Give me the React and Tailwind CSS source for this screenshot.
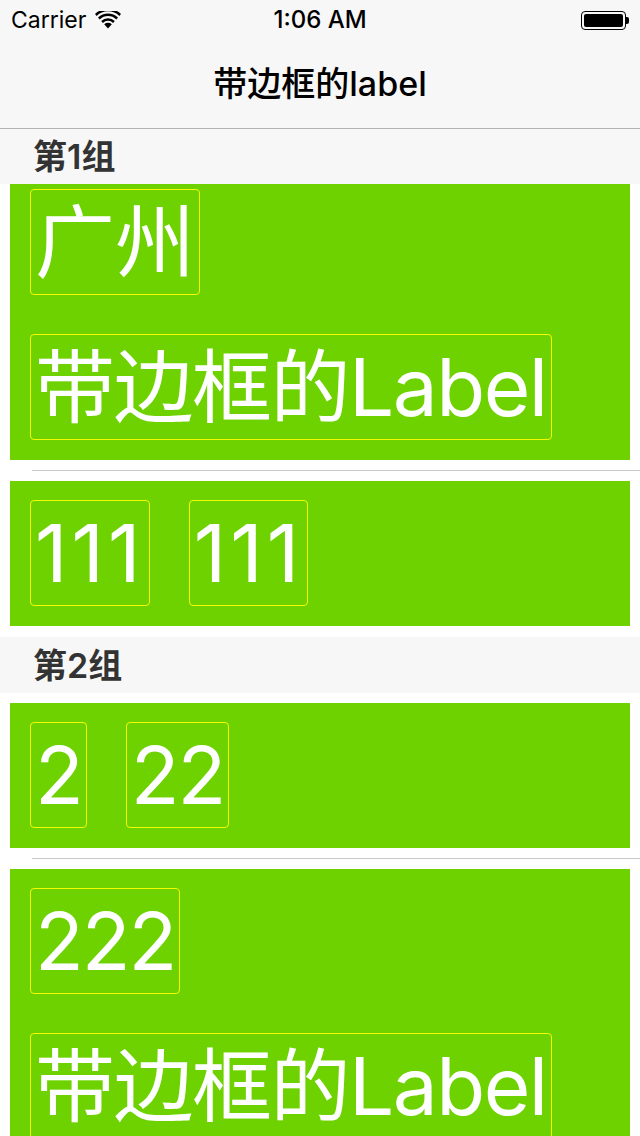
import React from 'react';

// tracking tweaks get the box widths close to the original label frames
const groups = [
  {
    title: '第1组',
    headerH: 'h-[55px]',
    rows: [
      {
        labels: [
          [{ t: '广州', cls: '' }],
          [{ t: '带边框的Label', cls: 'tracking-[-1.5px]' }],
        ],
        scrolled: true,
      },
      {
        labels: [
          [
            { t: '111', cls: 'tracking-[4px]' },
            { t: '111', cls: 'tracking-[4px]' },
          ],
        ],
      },
    ],
  },
  {
    title: '第2组',
    headerH: 'h-[56px]',
    rows: [
      {
        labels: [
          [
            { t: '2', cls: 'tracking-[-2px]' },
            { t: '22', cls: 'tracking-[-2px]' },
          ],
        ],
      },
      {
        labels: [
          [{ t: '222', cls: 'tracking-[-2px]' }],
          [{ t: '带边框的Label', cls: 'tracking-[-1.5px]' }],
        ],
      },
    ],
  },
];

function Wifi() {
  return (
    <svg width="26" height="18" viewBox="0 0 26 18">
      <path d="M13 17.5 L9.2 13.2 A5.6 5.6 0 0 1 16.8 13.2 Z" fill="#000" />
      <path d="M6.2 10 A9.8 9.8 0 0 1 19.8 10 L18.1 11.9 A7.3 7.3 0 0 0 7.9 11.9 Z" fill="#000" />
      <path d="M3 6.5 A14.4 14.4 0 0 1 23 6.5 L21.3 8.4 A11.9 11.9 0 0 0 4.7 8.4 Z" fill="#000" />
      <path d="M0 3 A18.8 18.8 0 0 1 26 3 L24.3 4.9 A16.3 16.3 0 0 0 1.7 4.9 Z" fill="#000" />
    </svg>
  );
}

function Battery() {
  return (
    <div className="flex items-center">
      <div className="flex h-[19px] w-[45px] rounded-[4px] border border-black p-[2px]">
        <div className="flex-1 rounded-[2px] bg-black" />
      </div>
      <div className="h-[7px] w-[3px] rounded-r-[2px] bg-black" />
    </div>
  );
}

function BorderLabel({ text, cls }) {
  return (
    <span className={`inline-flex h-[106px] items-center rounded-[4px] border border-[#f6fa00] px-[4px] text-[80px] leading-none text-white ${cls}`}>
      {text}
    </span>
  );
}

function Cell({ row, last }) {
  return (
    <div className="bg-white">
      <div className={`px-[10px] ${row.scrolled ? '' : 'pt-[10px]'}`}>
        <div className={`flex flex-col gap-[39px] bg-[#6dd200] px-[20px] pb-[20px] ${row.scrolled ? 'pt-[5px]' : 'pt-[19px]'}`}>
          {row.labels.map((line, i) => (
            <div key={i} className="flex gap-[39px]">
              {line.map((l, j) => (
                <BorderLabel key={j} text={l.t} cls={l.cls} />
              ))}
            </div>
          ))}
        </div>
      </div>
      {last ? <div className="h-[11px]" /> : <div className="h-[10px]" />}
      {!last && <div className="ml-[32px] h-px bg-[#c8c7cc]" />}
    </div>
  );
}

export default function App() {
  return (
    <div className="h-[1136px] w-[640px] overflow-hidden bg-white font-[Inter,'Noto_Sans_CJK_SC',sans-serif]">
      {/* status bar + nav */}
      <div className="border-b border-[#b2b2b2] bg-[#f7f7f7]">
        <div className="relative flex h-[40px] items-center justify-between px-[11px]">
          <div className="flex items-center gap-[9px] text-[23px] text-black">
            <span>Carrier</span>
            <Wifi />
          </div>
          <div className="absolute left-1/2 -translate-x-1/2 text-[24px] font-medium text-black">1:06 AM</div>
          <Battery />
        </div>
        <div className="flex h-[88px] items-center justify-center pb-[2px] text-[34px] font-medium text-black">
          带边框的label
        </div>
      </div>

      {groups.map((g, gi) => (
        <div key={gi}>
          <div className={`flex ${g.headerH} items-center bg-[#f7f7f7] pl-[33px] text-[34px] font-semibold text-[#333]`}>
            {g.title}
          </div>
          {g.rows.map((row, ri) => (
            <Cell key={ri} row={row} last={ri === g.rows.length - 1} />
          ))}
        </div>
      ))}
    </div>
  );
}
